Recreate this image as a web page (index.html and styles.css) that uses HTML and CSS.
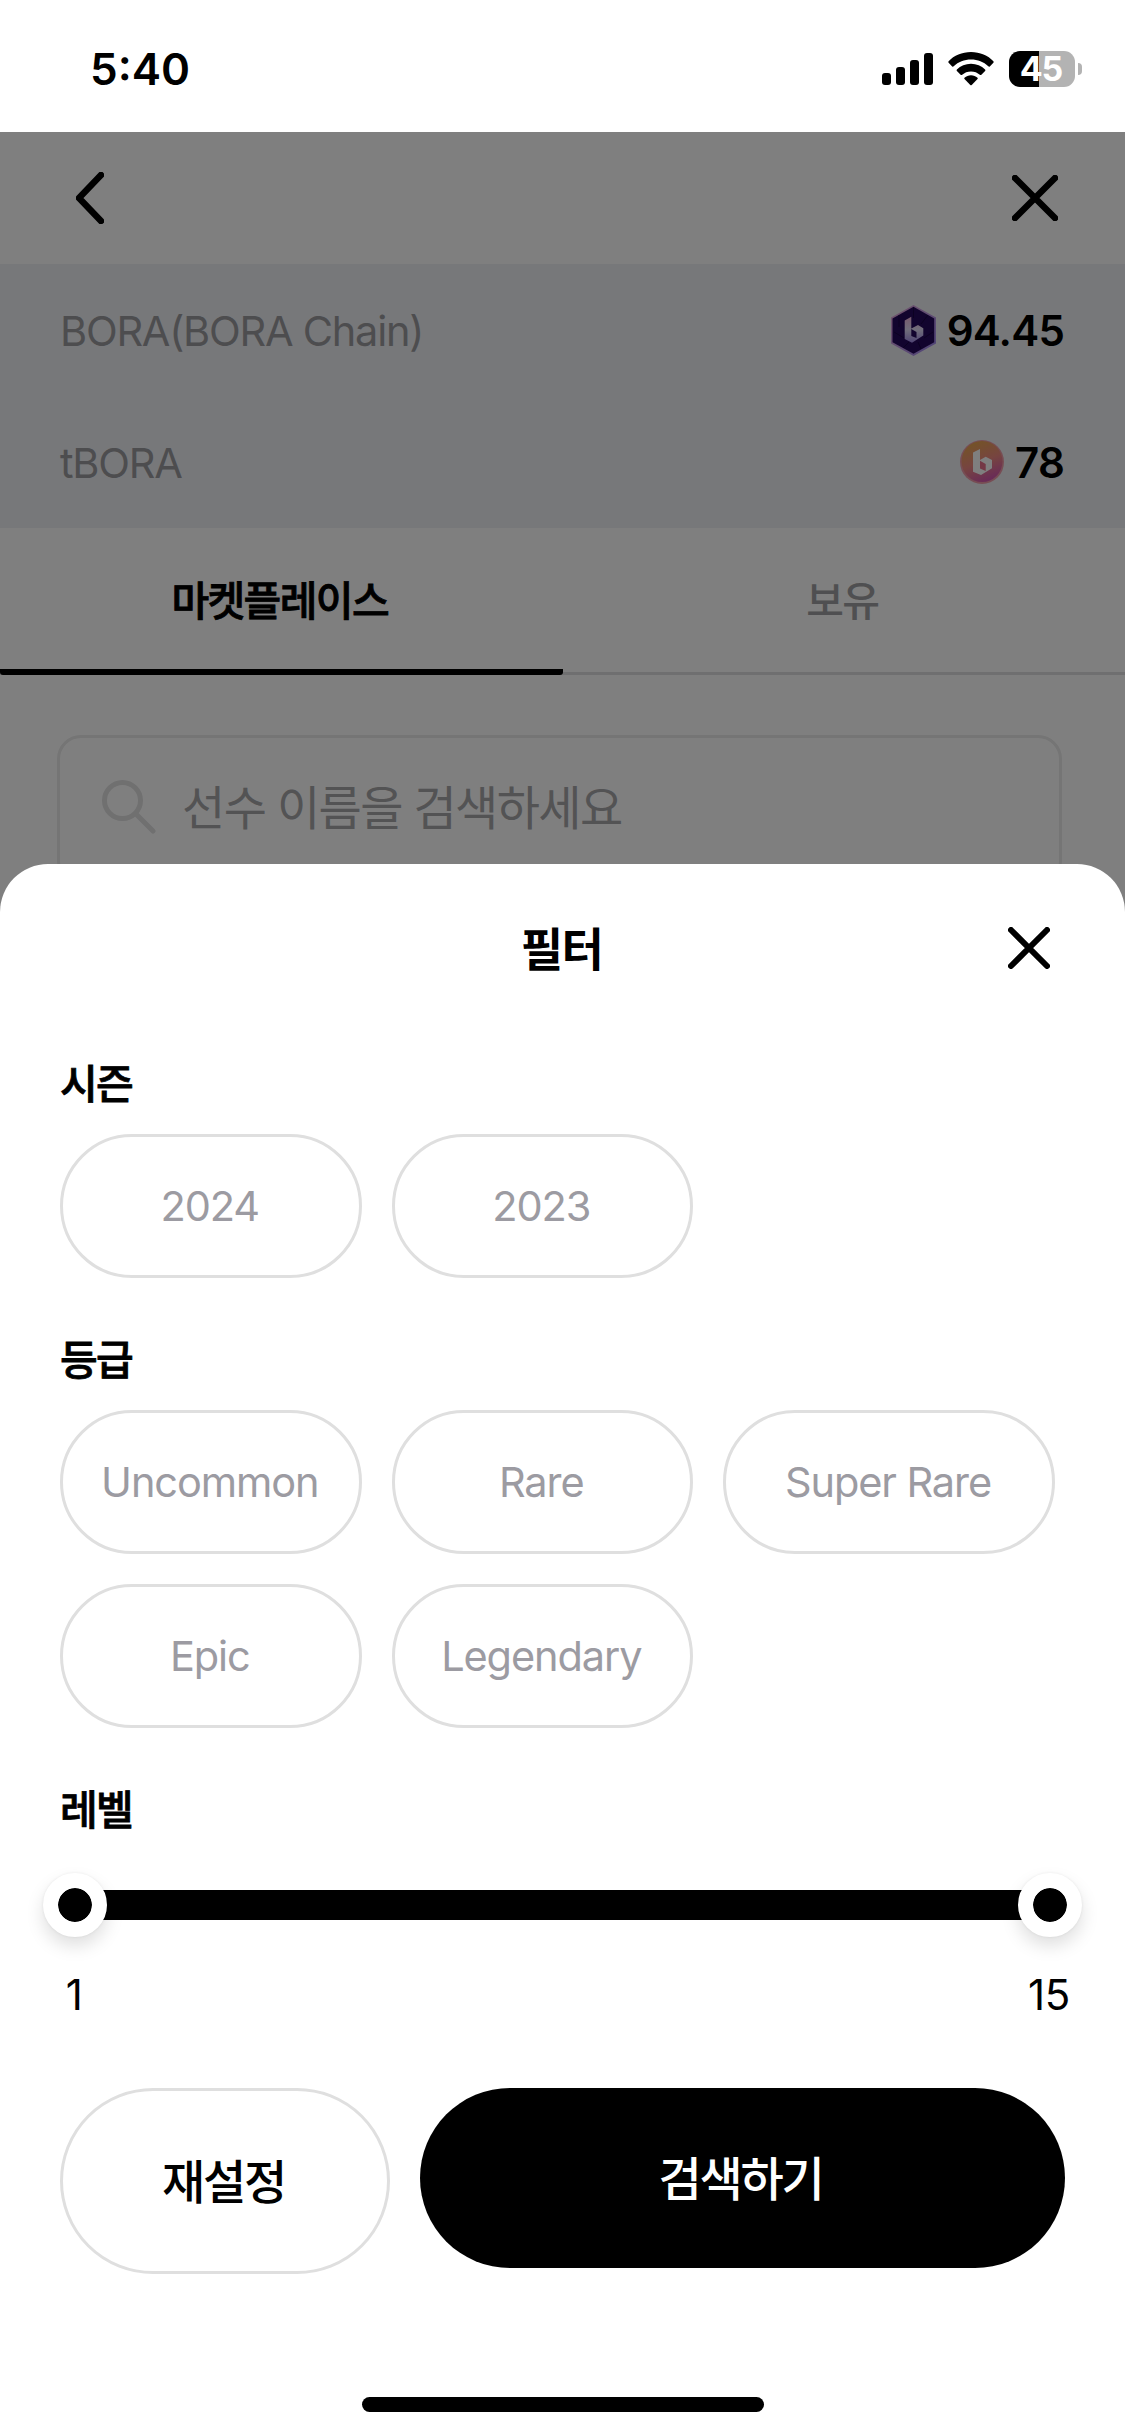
FILE: index.html
```html
<!DOCTYPE html>
<html lang="ko">
<head>
<meta charset="utf-8">
<title>마켓플레이스</title>
<link rel="stylesheet" href="styles.css">
</head>
<body>
<div class="app">
  <header class="status">
    <span class="status-time">5:40</span>
    <div class="status-icons">
      <svg class="signal" width="51" height="32" viewBox="0 0 51 32"><rect x="0" y="20" width="9" height="12" rx="3"/><rect x="14" y="14" width="9" height="18" rx="3"/><rect x="28" y="7" width="9" height="25" rx="3"/><rect x="42" y="0" width="9" height="32" rx="3"/></svg>
      <svg class="wifi" width="46" height="34" viewBox="0 0 46 34"><path d="M23 0C14 0 6 3.500 .6 9.200Q0 10 .6 10.800L4.200 14.400Q5 15 5.700 14.300C10.300 10 16.300 7.600 23 7.600S35.700 10 40.300 14.300Q41 15 41.800 14.400L45.400 10.800Q46 10 45.400 9.200C40 3.500 32 0 23 0Z"/><path d="M23 11.800C17.500 11.800 12.600 14 8.900 17.500Q8.200 18.200 8.900 19L12.600 22.700Q13.400 23.400 14.200 22.700C16.500 20.600 19.600 19.400 23 19.400S29.500 20.600 31.800 22.700Q32.600 23.400 33.400 22.700L37.100 19Q37.800 18.200 37.100 17.500C33.400 14 28.500 11.800 23 11.800Z"/><path d="M23 23.300C20.500 23.300 18.300 24.200 16.500 25.700Q15.900 26.400 16.500 27.100L22.300 33Q23 33.700 23.700 33L29.500 27.100Q30.100 26.400 29.500 25.700C27.700 24.200 25.500 23.300 23 23.300Z"/></svg>
      <div class="battery"><span class="battery-body">45</span><span class="battery-nub"></span></div>
    </div>
  </header>

  <div class="screen">
    <nav class="topbar">
      <svg width="28" height="52" viewBox="0 0 28 52"><path d="M25 3L3 26L25 49"/></svg>
      <svg width="46" height="46" viewBox="0 0 46 46"><path d="M3 3L43 43M43 3L3 43"/></svg>
    </nav>
    <section class="balances">
      <div class="balance">
        <span class="balance-name">BORA(BORA Chain)</span>
        <svg width="45" height="51" viewBox="0 0 45 51">
          <defs>
            <linearGradient id="rim" x1="0" y1="0" x2="1" y2="1"><stop offset="0" stop-color="#e6a8d6"/><stop offset="1" stop-color="#9a86f0"/></linearGradient>
            <linearGradient id="mark" x1="0" y1="0" x2="0" y2="1"><stop offset="0" stop-color="#f0b4dc"/><stop offset=".5" stop-color="#e2dcf6"/><stop offset="1" stop-color="#a08ae8"/></linearGradient>
          </defs>
          <path d="M22.500 0L45 12.500V38.500L22.500 51L0 38.500V12.500Z" fill="url(#rim)"/>
          <path d="M22.500 1.800L43.200 13.500V37.300L22.500 48.800L1.500 37.300V13.500Z" fill="#25085c"/>
          <path d="M22.500 2V13M8 10L8 22M37 10L30 19M3 27L13 33M12 43L18 37M30 44L27 37M42 27L33 33" stroke="#180344" stroke-width="1" fill="none"/>
          <path d="M13.700 15.500L20.300 11.700V23.500L27 20L32.300 23.300V30.500L21 37.700L13.700 34Z" fill="url(#mark)"/>
          <path d="M20.300 24L25.500 27V33L20.300 31Z" fill="#25085c"/>
        </svg>
        <span class="balance-value">94.45</span>
      </div>
      <div class="balance">
        <span class="balance-name">tBORA</span>
        <svg width="44" height="44" viewBox="0 0 44 44">
          <defs><linearGradient id="coin" x1=".3" y1="0" x2=".7" y2="1"><stop offset="0" stop-color="#e8a84e"/><stop offset=".5" stop-color="#ee8a80"/><stop offset="1" stop-color="#d050b4"/></linearGradient></defs>
          <circle cx="22" cy="22" r="22" fill="#ee9ba8"/>
          <circle cx="22" cy="21.500" r="20.500" fill="url(#coin)"/>
          <path d="M13 12.500L20 9V20L25.700 16.700L32 20V28.300L21 35L13 31.700Z" fill="#fff"/>
          <path d="M20 20.700L25.700 24V31L20 28.500Z" fill="#e8708c"/>
        </svg>
        <span class="balance-value">78</span>
      </div>
    </section>
    <div class="tabs">
      <div class="tab tab-active">마켓플레이스</div>
      <div class="tab">보유</div>
    </div>
    <div class="search">
      <svg width="54" height="54" viewBox="0 0 54 54"><circle cx="20.500" cy="20.500" r="18"/><path d="M33.500 33.500L51 51"/></svg>
      <span class="search-text">선수 이름을 검색하세요</span>
    </div>
    <div class="overlay"></div>

    <section class="sheet">
      <div class="sheet-head">
        <h1 class="sheet-title">필터</h1>
        <svg class="sheet-close" width="42" height="42" viewBox="0 0 42 42"><path d="M3 3L39 39M39 3L3 39"/></svg>
      </div>
      <h2 class="label">시즌</h2>
      <div class="chips">
        <span class="chip">2024</span><span class="chip">2023</span>
      </div>
      <h2 class="label">등급</h2>
      <div class="chips">
        <span class="chip">Uncommon</span><span class="chip">Rare</span><span class="chip chip-wide">Super Rare</span>
        <span class="chip">Epic</span><span class="chip">Legendary</span>
      </div>
      <h2 class="label">레벨</h2>
      <div class="slider">
        <span class="thumb"></span><span class="track"></span><span class="thumb"></span>
      </div>
      <div class="range"><span class="range-value">1</span><span class="range-value">15</span></div>
      <div class="actions">
        <span class="btn btn-reset">재설정</span>
        <span class="btn btn-search">검색하기</span>
      </div>
      <span class="home"></span>
    </section>
  </div>
</div>
</body>
</html>
```
FILE: styles.css
```css
* { box-sizing: border-box; }
body { margin: 0; background: #fff; font-family: Inter, "Noto Sans CJK KR", sans-serif; color: #000; }
h1, h2 { margin: 0; }
svg { display: block; flex: none; }

.app { width: 1125px; height: 2436px; display: flex; flex-direction: column; overflow: hidden; }

.status { height: 132px; padding: 0 43px 0 90px; display: flex; justify-content: space-between; }
.status-time { font-size: 44px; font-weight: 600; line-height: 54px; padding-top: 42px; }
.status-icons { display: flex; padding-top: 51px; }
.signal { margin-top: 2px; }
.wifi { margin: 1px 15px 0; }
.battery { display: flex; align-items: center; gap: 3px; height: 36px; }
.battery-body { width: 66px; height: 36px; border-radius: 11px; background: linear-gradient(90deg, #000 30px, #b3b3b3 30px); color: #fff; font-size: 34px; font-weight: 700; line-height: 36px; text-align: center; letter-spacing: -1px; padding-right: 2px; }
.battery-nub { width: 4px; height: 12px; border-radius: 0 4px 4px 0; background: #b3b3b3; }

.screen { position: relative; height: 2304px; display: flex; flex-direction: column; }
.topbar { height: 132px; padding: 0 67px 0 76px; display: flex; justify-content: space-between; align-items: center; fill: none; stroke: #000; stroke-width: 6.500; stroke-linecap: round; stroke-linejoin: round; }

.balances { background: #eff1f5; }
.balance { height: 132px; padding: 0 60px; display: flex; align-items: center; }
.balance-name { flex: 1; padding-top: 1px; font-size: 41.500px; line-height: 50px; letter-spacing: -1.250px; color: #9b9b9f; }
.balance-value { margin-left: 11px; padding: 1px 1px 0 0; font-size: 42px; font-weight: 600; line-height: 50px; letter-spacing: -.8px; }

.tabs { height: 147px; display: grid; grid-template-columns: 1fr 1fr; border-bottom: 3px solid #dfdfe0; }
.tab { height: 147px; padding-right: 3px; font-size: 41px; line-height: 146px; letter-spacing: -1.600px; text-align: center; font-weight: 500; color: #9f9fa3; }
.tab-active { border-bottom: 6px solid #000; border-radius: 3px; -webkit-text-stroke: .8px #000; color: #000; }

.search { margin: 60px 63px 0 57px; height: 150px; padding: 0 42px; border: 3px solid #eaeaea; border-radius: 24px; display: flex; align-items: center; gap: 26px; }
.search svg { margin-top: -6px; fill: none; stroke: #e0e0e1; stroke-width: 5; stroke-linecap: round; }
.search-text { margin-top: -5px; font-size: 47px; line-height: 60px; letter-spacing: -1.600px; color: #a6a6a9; }

.overlay { position: absolute; inset: 0; background: rgba(0, 0, 0, .5); }

.sheet { position: absolute; inset: 732px 0 0; background: #fff; border-radius: 48px 48px 0 0; padding: 0 60px; display: flex; flex-direction: column; }
.sheet-head { height: 168px; padding: 0 15px 0 55px; display: grid; grid-template-columns: 1fr auto; align-items: center; }
.sheet-title { padding-top: 2px; font-size: 46px; font-weight: 700; line-height: 60px; letter-spacing: -1.500px; text-align: center; }
.sheet-close { fill: none; stroke: #000; stroke-width: 6; stroke-linecap: round; }
.label { font-size: 41px; font-weight: 500; -webkit-text-stroke: .8px #000; line-height: 62px; letter-spacing: -1.600px; margin: 21px 0 19px; }
.chips { display: flex; flex-wrap: wrap; gap: 30px; margin-bottom: 30px; }
.chip { width: 301.500px; height: 144px; padding-right: 2px; border: 3px solid #dfdfdf; border-radius: 72px; font-size: 41.500px; line-height: 139px; color: #9c9ba2; text-align: center; letter-spacing: -1.100px; }
.chip-wide { width: 332px; }

.slider { display: flex; align-items: center; height: 66px; margin: 12px -17px 0; }
.track { flex: 1; height: 30px; margin: 0 -6px; background: #000; }
.thumb { position: relative; width: 64px; height: 64px; border-radius: 50%; border: 15px solid #fff; background: #000; background-clip: padding-box; box-shadow: 0 9px 18px rgba(0, 0, 0, .13), 0 0 3px rgba(0, 0, 0, .08); }
.range { display: flex; justify-content: space-between; margin: 32px -45px 0; }
.range-value { width: 120px; padding-right: 2px; font-size: 42px; line-height: 50px; text-align: center; letter-spacing: -.4px; }
.actions { display: flex; align-items: flex-start; gap: 30px; margin-top: 68px; }
.btn { border-radius: 93px; font-size: 47px; letter-spacing: -2.300px; text-align: center; font-weight: 500; }
.btn-reset { width: 330px; height: 186px; padding-right: 3px; line-height: 182px; border: 3px solid #dfdfdf; }
.btn-search { flex: 1; height: 180px; padding-right: 4px; line-height: 181px; background: #000; color: #fff; }
.home { width: 402px; height: 15px; border-radius: 8px; background: #000; margin: auto auto 24px; }
```
